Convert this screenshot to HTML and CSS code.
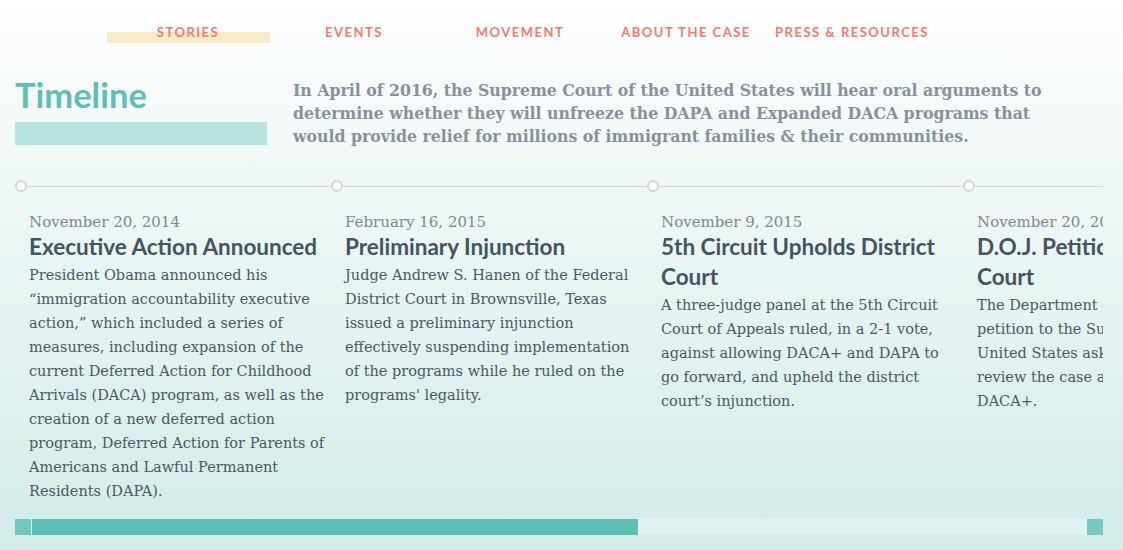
FILE: index.html
```html
<!DOCTYPE html>
<html>
<head>
<meta charset="utf-8">
<link rel="stylesheet" href="styles.css">
</head>
<body>
<nav class="nav">
  <a class="nav-item active"><span>STORIES</span></a>
  <a class="nav-item"><span>EVENTS</span></a>
  <a class="nav-item"><span>MOVEMENT</span></a>
  <a class="nav-item"><span>ABOUT THE CASE</span></a>
  <a class="nav-item"><span>PRESS &amp; RESOURCES</span></a>
</nav>
<header class="intro">
  <div class="title-block">
    <h1>Timeline</h1>
    <div class="title-bar"></div>
  </div>
  <p class="lead">In April of 2016, the Supreme Court of the United States will hear oral arguments to determine whether they will unfreeze the DAPA and Expanded DACA programs that would provide relief for millions of immigrant families &amp; their communities.</p>
</header>
<section class="timeline">
  <div class="track">
    <div class="events">
      <article class="event">
        <div class="dot"></div>
        <div class="date">November 20, 2014</div>
        <h2>Executive Action Announced</h2>
        <p>President Obama announced his “immigration accountability executive action,” which included a series of measures, including expansion of the current Deferred Action for Childhood Arrivals (DACA) program, as well as the creation of a new deferred action program, Deferred Action for Parents of Americans and Lawful Permanent Residents (DAPA).</p>
      </article>
      <article class="event">
        <div class="dot"></div>
        <div class="date">February 16, 2015</div>
        <h2>Preliminary Injunction</h2>
        <p>Judge Andrew S. Hanen of the Federal District Court in Brownsville, Texas issued a preliminary injunction effectively suspending implementation of the programs while he ruled on the programs' legality.</p>
      </article>
      <article class="event">
        <div class="dot"></div>
        <div class="date">November 9, 2015</div>
        <h2>5th Circuit Upholds District Court</h2>
        <p>A three-judge panel at the 5th Circuit Court of Appeals ruled, in a 2-1 vote, against allowing DACA+ and DAPA to go forward, and upheld the district court’s injunction.</p>
      </article>
      <article class="event">
        <div class="dot"></div>
        <div class="date">November 20, 2015</div>
        <h2>D.O.J. Petitions Supreme Court</h2>
        <p>The Department of Justice filed a petition to the Supreme Court of the United States asking the justices to review the case against DAPA and DACA+.</p>
      </article>
    </div>
  </div>
  <div class="scrollbar">
    <div class="sb-btn"></div>
    <div class="sb-thumb"></div>
    <div class="sb-rest"></div>
    <div class="sb-btn right"></div>
  </div>
</section>
</body>
</html>
```
FILE: styles.css
```css
html, body {
  margin: 0;
  padding: 0;
}
body {
  width: 1123px;
  height: 550px;
  overflow: hidden;
  background: linear-gradient(to bottom, #ffffff 0px, #f7fafb 80px, #eef7f6 200px, #d2ece8 550px);
  font-family: "DejaVu Serif", serif;
}
.nav {
  display: flex;
  padding: 25px 0 0 105px;
  height: 22px;
}
.nav-item {
  width: 166px;
  display: flex;
  justify-content: center;
  font-family: "Lato", "Open Sans", sans-serif;
  font-weight: 700;
  font-size: 13px;
  letter-spacing: 1.5px;
  color: #f37b6d;
  line-height: 15px;
  position: relative;
}
.nav-item.active::before {
  content: "";
  position: absolute;
  left: 2px;
  top: 7px;
  width: 163px;
  height: 11px;
  background: #f7ebca;
}
.nav-item span {
  position: relative;
}
.intro {
  display: flex;
  padding: 30px 0 0 15px;
  height: 103px;
}
.title-block {
  width: 252px;
  margin-right: 26px;
}
h1 {
  margin: 0;
  font-family: "Lato", "Open Sans", sans-serif;
  font-weight: 700;
  font-size: 34.5px;
  line-height: 36px;
  color: #5fbfb5;
}
.title-bar {
  margin-top: 9px;
  height: 23px;
  background: #b9e3df;
}
.lead {
  margin: 0;
  width: 790px;
  font-family: "DejaVu Serif", serif;
  font-stretch: condensed;
  font-weight: 700;
  font-size: 17.5px;
  line-height: 23px;
  color: #87919b;
  padding-top: 2px;
}
.timeline {
  padding-left: 15px;
  width: 1088px;
}
.track {
  overflow: hidden;
  background: linear-gradient(#d3d7da, #d3d7da) no-repeat 0 6px / 100% 1px;
}
.events {
  display: flex;
}
.event {
  width: 316px;
  flex: none;
  padding-left: 14px;
  box-sizing: border-box;
}
.dot {
  width: 8px;
  height: 8px;
  margin-left: -14px;
  border: 2px solid #d3d7da;
  border-radius: 50%;
  background: #fff;
  margin-bottom: 21px;
}
.date {
  font-family: "DejaVu Serif", serif;
  font-weight: 400;
  font-size: 15px;
  line-height: 18px;
  color: #7e8892;
}
h2 {
  margin: 1px 0 0;
  width: 300px;
  font-family: "Lato", "Open Sans", sans-serif;
  font-weight: 700;
  font-size: 22.5px;
  line-height: 30px;
  color: #435463;
}
.event p {
  margin: 1px 0 0;
  width: 300px;
  font-family: "DejaVu Serif", serif;
  font-size: 14.5px;
  line-height: 24px;
  color: #4c5864;
}
.scrollbar {
  position: absolute;
  left: 15px;
  top: 519px;
  width: 1088px;
  height: 16px;
  display: flex;
}
.sb-btn {
  width: 16px;
  background: #72c7bd;
  margin-right: 1px;
}
.sb-btn.right {
  margin-right: 0;
  background: #78c9c0;
}
.sb-thumb {
  width: 606px;
  background: #60bfb5;
}
.sb-rest {
  flex: 1;
  background: #e0f2ef;
}
```
